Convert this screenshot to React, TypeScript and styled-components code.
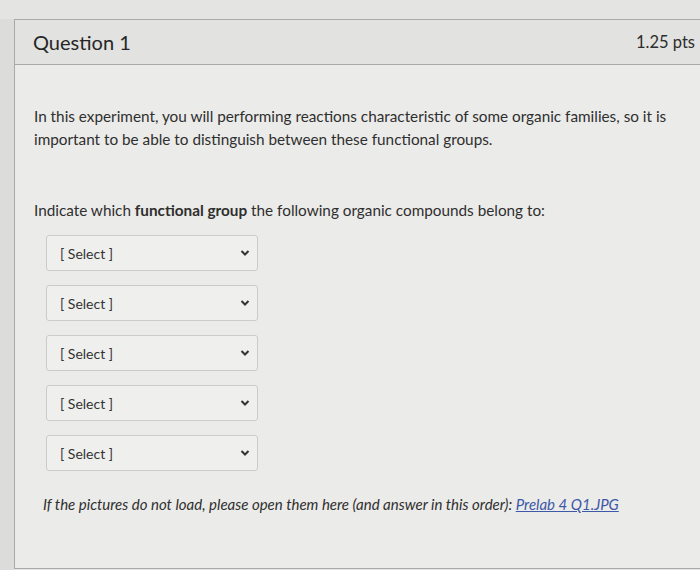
import styled, { createGlobalStyle } from "styled-components";

const GlobalStyle = createGlobalStyle`
  html, body {
    margin: 0;
    padding: 0;
    background: #e4e4e2;
    font-family: Lato, "Open Sans", sans-serif;
    color: #2d2d2d;
  }
`;

const Page = styled.div`
  display: flex;
  width: 700px;
  height: 570px;
  overflow: hidden;
  padding-top: 19px;
  box-sizing: border-box;
`;

const Gutter = styled.div`
  width: 14px;
  flex-shrink: 0;
  background: #dcdcda;
`;

const Card = styled.div`
  flex: 1;
  margin-right: -20px;
  border: 1px solid #a9a9a7;
  border-right: none;
  background: #ebebe9;
  height: 548px;
  display: flex;
  flex-direction: column;
`;

const Header = styled.div`
  display: flex;
  align-items: center;
  justify-content: space-between;
  height: 44px;
  padding: 0 25px 0 18px;
  background: #e2e2e0;
  border-bottom: 1px solid #a9a9a7;
`;

const Title = styled.h2`
  margin: 0;
  font-size: 20px;
  font-weight: 400;
  color: #262626;
`;

const Points = styled.span`
  font-size: 16.5px;
  color: #2d2d2d;
`;

const Body = styled.div`
  padding: 40px 20px 0 19px;
`;

const Paragraph = styled.p<{ $gap?: number }>`
  margin: 0 0 ${(p) => p.$gap ?? 0}px;
  font-size: 15.3px;
  line-height: 23px;
  color: #2f2f2f;
`;

const SelectList = styled.div`
  display: flex;
  flex-direction: column;
  gap: 14px;
  margin: 13px 0 0 12px;
`;

const SelectBox = styled.div`
  display: flex;
  align-items: center;
  justify-content: space-between;
  width: 212px;
  height: 36px;
  box-sizing: border-box;
  padding: 0 7px 0 13px;
  border: 1px solid #c9cccd;
  border-radius: 3px;
  background: #efefed;
  font-size: 14px;
  color: #333;
`;

const Note = styled.p`
  margin: 24px 0 0 9px;
  font-size: 15px;
  font-style: italic;
  color: #2f2f2f;
`;

const Link = styled.a`
  color: #3d58a8;
  text-decoration: underline;
`;

const Chevron = () => (
  <svg width="10" height="8" viewBox="0 0 10 8">
    <path d="M1.5 2 L5 5.5 L8.5 2" fill="none" stroke="#333" strokeWidth="2" />
  </svg>
);

const App = () => {
  return (
    <Page>
      <GlobalStyle />
      <Gutter />
      <Card>
        <Header>
          <Title>Question 1</Title>
          <Points>1.25 pts</Points>
        </Header>
        <Body>
          <Paragraph $gap={48}>
            In this experiment, you will performing reactions characteristic of some organic families, so it is
            important to be able to distinguish between these functional groups.
          </Paragraph>
          <Paragraph>
            Indicate which <strong>functional group</strong> the following organic compounds belong to:
          </Paragraph>
          <SelectList>
            {[0, 1, 2, 3, 4].map((i) => (
              <SelectBox key={i}>
                <span>[ Select ]</span>
                <Chevron />
              </SelectBox>
            ))}
          </SelectList>
          <Note>
            If the pictures do not load, please open them here (and answer in this order):{" "}
            <Link href="#">Prelab 4 Q1.JPG</Link>
          </Note>
        </Body>
      </Card>
    </Page>
  );
};

export default App;
